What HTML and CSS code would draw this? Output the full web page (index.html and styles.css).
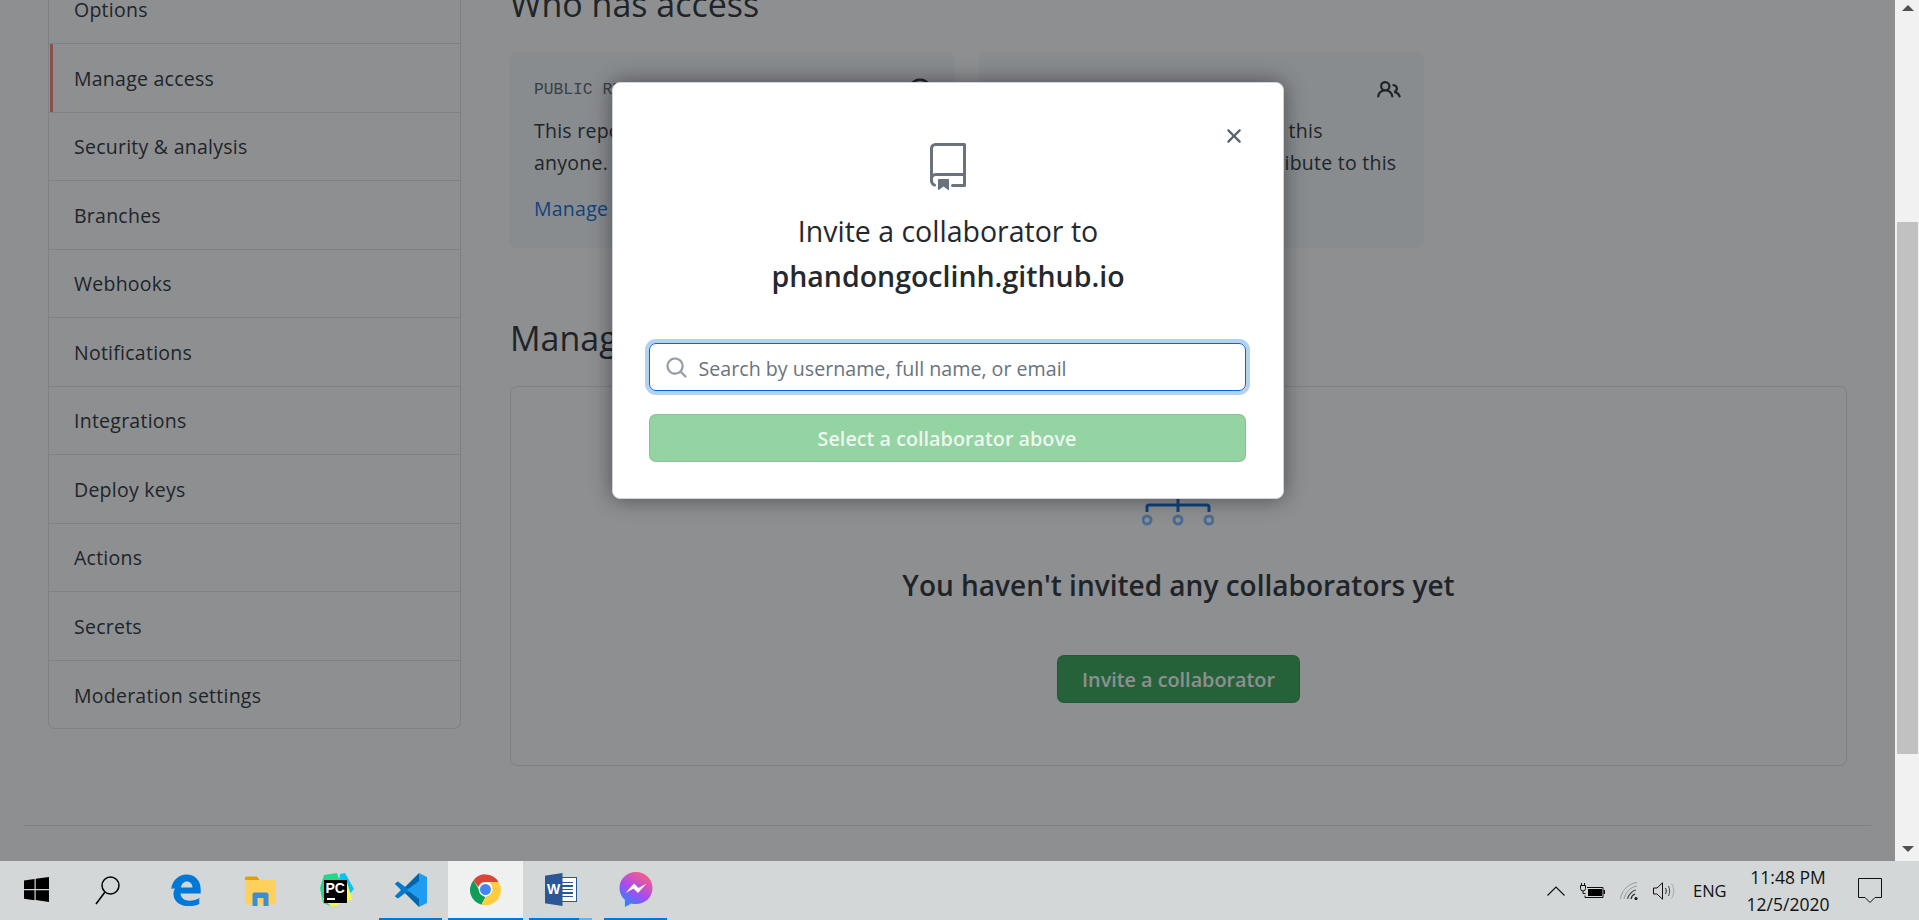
FILE: index.html
```html
<!DOCTYPE html>
<html lang="en">
<head>
    <meta charset="UTF-8">
    <title>Manage access</title>
    <link rel="stylesheet" href="styles.css">
</head>
<body>
    <div class="desktop">
        <div class="viewport">
            <div class="page">
                <div class="columns">
                    <!-- Settings menu -->
                    <nav class="menu">
                        <a class="menu-item">Options</a>
                        <a class="menu-item selected">Manage access</a>
                        <a class="menu-item">Security &amp; analysis</a>
                        <a class="menu-item">Branches</a>
                        <a class="menu-item">Webhooks</a>
                        <a class="menu-item">Notifications</a>
                        <a class="menu-item">Integrations</a>
                        <a class="menu-item">Deploy keys</a>
                        <a class="menu-item">Actions</a>
                        <a class="menu-item">Secrets</a>
                        <a class="menu-item">Moderation settings</a>
                    </nav>

                    <main class="content">
                        <h2 class="section-title">Who has access</h2>
                        <div class="cards">
                            <div class="card">
                                <div class="card-head">
                                    <span class="card-label">PUBLIC REPOSITORY</span>
                                    <svg class="card-icon" viewBox="0 0 16 16"><circle cx="8" cy="8" r="7" fill="none" stroke="currentColor" stroke-width="1.5"/></svg>
                                </div>
                                <p>This repository is public and visible to<br>anyone.</p>
                                <a class="link">Manage</a>
                            </div>
                            <div class="card">
                                <div class="card-head">
                                    <span class="card-label">DIRECT ACCESS</span>
                                    <svg class="card-icon" viewBox="0 0 16 16"><path fill="currentColor" fill-rule="evenodd" d="M5.5 3.5a2 2 0 100 4 2 2 0 000-4zM2 5.5a3.5 3.5 0 115.898 2.549 5.507 5.507 0 013.034 4.084.75.75 0 11-1.482.235 4.001 4.001 0 00-7.9 0 .75.75 0 01-1.482-.236A5.507 5.507 0 013.102 8.05 3.49 3.49 0 012 5.5zM11 4a.75.75 0 100 1.5 1.5 1.5 0 01.666 2.844.75.75 0 00-.416.672v.352a.75.75 0 00.574.73c1.2.289 2.162 1.2 2.522 2.372a.75.75 0 101.434-.44 5.01 5.01 0 00-2.56-3.012A3 3 0 0011 4z"/></svg>
                                </div>
                                <p>0 collaborators have access to this<br>repository. Only you can contribute to this<br>repository.</p>
                            </div>
                        </div>

                        <h2 class="section-title manage-title">Manage access</h2>
                        <div class="empty-box">
                            <svg class="network-icon" width="72" height="150" viewBox="0 0 72 150">
                                <path d="M36 108v17" stroke="#0366d6" stroke-width="3" fill="none"/>
                                <path d="M5 125v-5a2 2 0 012-2h58a2 2 0 012 2v5" stroke="#0366d6" stroke-width="3" fill="none"/>
                                <g fill="none" stroke="#79b8ff" stroke-width="3">
                                    <circle cx="5" cy="133" r="4"/>
                                    <circle cx="36" cy="133" r="4"/>
                                    <circle cx="67" cy="133" r="4"/>
                                </g>
                            </svg>
                            <h3 class="empty-title">You haven't invited any collaborators yet</h3>
                            <button class="btn-invite" type="button">Invite a collaborator</button>
                        </div>
                    </main>
                </div>
                <div class="page-rule"></div>
            </div>

            <div class="overlay"></div>

            <!-- Invite dialog -->
            <div class="modal">
                <svg class="modal-close" viewBox="0 0 16 16"><path fill="currentColor" fill-rule="evenodd" d="M3.720 3.720a.75.75 0 011.060 0L8 6.940l3.220-3.220a.75.75 0 111.060 1.060L9.060 8l3.220 3.220a.75.75 0 11-1.060 1.060L8 9.060l-3.220 3.220a.75.75 0 01-1.060-1.060L6.940 8 3.720 4.780a.75.75 0 010-1.060z"/></svg>
                <svg class="modal-book" viewBox="3 0 18 24"><path fill="currentColor" fill-rule="evenodd" d="M3 2.750A2.750 2.750 0 015.750 0h14.500a.75.75 0 01.750.750v20.500a.75.75 0 01-.750.750h-6a.75.75 0 010-1.500h5.250v-4H6A1.500 1.500 0 004.500 18v.750c0 .716.430 1.334 1.050 1.605a.75.75 0 01-.600 1.374A3.250 3.250 0 013 18.750v-16zM19.500 1.500V15H6c-.546 0-1.059.146-1.500.401V2.750c0-.690.560-1.250 1.250-1.250H19.500z"/><path fill="currentColor" d="M7 18.250a.25.25 0 01.25-.25h5a.25.25 0 01.25.25v5.010a.25.25 0 01-.397.201l-2.206-1.604a.25.25 0 00-.294 0L7.397 23.460a.25.25 0 01-.397-.200v-5.010z"/></svg>
                <div class="modal-title">Invite a collaborator to</div>
                <div class="modal-repo">phandongoclinh.github.io</div>
                <div class="search-box">
                    <svg class="search-icon" viewBox="0 0 16 16"><path fill="currentColor" fill-rule="evenodd" d="M11.500 7a4.499 4.499 0 11-8.998 0A4.499 4.499 0 0111.500 7zm-.820 4.740a6 6 0 111.060-1.060l3.040 3.040a.75.75 0 11-1.060 1.060l-3.040-3.040z"/></svg>
                    <span class="search-text">Search by username, full name, or email</span>
                </div>
                <button class="btn-select" type="button">Select a collaborator above</button>
            </div>
        </div>

        <!-- Browser scrollbar -->
        <div class="scrollbar">
            <div class="arrow-up"></div>
            <div class="thumb"></div>
            <div class="arrow-down"></div>
        </div>
    </div>

    <footer class="taskbar">
        <div class="tb-apps">
            <div class="tb-item tb-start">
                <svg width="25" height="25" viewBox="0 0 25 25"><path fill="#000" d="M0 3.500l10.500-1.500v10H0zM11.700 1.800L25 0v12H11.700zM0 13.200h10.500v10L0 21.700zM11.700 13.200H25V25l-13.300-1.900z"/></svg>
            </div>
            <div class="tb-item tb-start">
                <svg width="26" height="32" viewBox="0 0 26 32"><circle cx="15.500" cy="11.500" r="8.500" fill="none" stroke="#000" stroke-width="1.500"/><path d="M10 18L1 30" stroke="#000" stroke-width="1.500"/></svg>
            </div>
            <div class="tb-item tb-first">
                <svg width="30" height="32" viewBox="0 0 30 32"><path fill="#0078d7" d="M.3 15C1.200 6 8 .5 15.500.5 24 .5 29.700 6.500 29.700 15.500v4H9.500c.5 5 4.500 7.200 9 7.200 3.600 0 7-1 9.800-2.700v6c-3 1.500-6.900 2.200-10.800 2.200C8.500 32 2.500 27 2.500 20c0-4.500 2.500-8.500 7.500-10.500-1.800 1.700-3 3.500-3.300 5-1 .1-4.500-.5-6.400.5zm9.700-1.500h11.500c0-3.500-2.400-6-5.500-6-3.200 0-5.600 2.500-6 6z"/></svg>
            </div>
            <div class="tb-item">
                <svg width="31" height="32" viewBox="0 0 31 32"><path fill="#e0a100" d="M0 4a1.500 1.500 0 011.500-1.500h10.500l2.500 3.500H0z"/><path fill="#ffd15c" d="M0 6h29.500A1.500 1.500 0 0131 7.500V29a1.500 1.500 0 01-1.500 1.500h-28A1.500 1.500 0 010 29z"/><path fill="#3d8dd6" d="M7.500 32V20.500a2 2 0 012-2h12a2 2 0 012 2V32h-5v-8h-6v8z"/></svg>
            </div>
            <div class="tb-item">
                <div class="pycharm">
                    <svg class="pc-back" width="36" height="36" viewBox="0 0 36 36"><path fill="#21d789" d="M2 16L6 3l13-2 4 12-8 22L5 31z"/><path fill="#07c3f2" d="M22 2l5-1 9 16-8 9-8-10z"/><path fill="#fcf84a" d="M14 12l15-2 5 17-20 8-9-8z"/></svg>
                    <div class="pc-tile">PC<i></i></div>
                </div>
            </div>
            <div class="tb-item running">
                <svg width="36" height="36" viewBox="0 0 36 36"><path fill="#0065a9" d="M26 1L12 15 5 10 2 12l6.500 6L2 24l3 2 7-5 14 14z"/><path fill="#007acc" d="M12 15L5 9.500 2 11.500 8 18 2 24.500l3 2 7-5.500 9-3z"/><path fill="#1f9cf0" d="M26 1l8 4v26l-8 4V9l-12 9 12 9z"/></svg>
            </div>
            <div class="tb-item running active">
                <svg width="33" height="33" viewBox="0 0 48 48"><path fill="#db4437" d="M24 2a22 22 0 0119 11H24a11 11 0 00-10.500 7.500L6.600 10.500A22 22 0 0124 2z"/><path fill="#0f9d58" d="M6.600 10.500l9.500 16.500A11 11 0 0024 35l-6 11A22 22 0 016.600 10.500z"/><path fill="#ffcd40" d="M43 13a22 22 0 01-25 33l9.500-16.500A11 11 0 0033 18l-3-5z"/><circle cx="24" cy="24" r="10" fill="#fff"/><circle cx="24" cy="24" r="8" fill="#4285f4"/></svg>
            </div>
            <div class="tb-item running stacked">
                <div class="word">
                    <div class="word-page"><i></i><i></i><i></i><i></i><i></i></div>
                    <div class="word-cover">W</div>
                </div>
            </div>
            <div class="tb-item running">
                <svg width="34" height="36" viewBox="0 0 34 36"><defs><linearGradient id="msgr" x1="0.2" y1="1" x2="0.8" y2="0"><stop offset="0" stop-color="#1d8cff"/><stop offset=".45" stop-color="#a84bf0"/><stop offset="1" stop-color="#ff5f7e"/></linearGradient></defs><path fill="url(#msgr)" d="M17 0C7.500 0 .5 7 .5 16c0 4.800 2 8.900 5.400 11.800V35l6.300-3.500c1.500.4 3.100.6 4.800.6 9.500 0 16.500-7 16.500-16S26.500 0 17 0z"/><path fill="#fff" d="M6.500 21l8.500-9.500 4.500 4.500 8-4.500-8.500 9.500-4.500-4.500z"/></svg>
            </div>
        </div>

        <div class="tb-tray">
            <svg class="tray-chevron" width="18" height="10" viewBox="0 0 18 10"><path d="M.5 9.500L9 1l8.500 8.500" fill="none" stroke="#111" stroke-width="1.200"/></svg>
            <svg class="tray-battery" width="25" height="16" viewBox="0 0 25 16"><path d="M1.500 0v2.500M4.500 0v2.500" stroke="#111"/><path d="M.5 2.500h5v3a2.500 2.500 0 01-5 0zM3 8v2.500h2.500" fill="none" stroke="#111"/><path d="M7 4.500h16v10H5v-2" fill="none" stroke="#111"/><rect x="8" y="6" width="14" height="7" fill="#000"/><rect x="23.500" y="7" width="1.500" height="4" fill="#111"/></svg>
            <svg class="tray-wifi" width="18" height="18" viewBox="0 0 18 18"><g fill="none"><path d="M.5 17C1.500 8.500 8.500 1.500 17 .5" stroke="#999" stroke-width="1"/><path d="M4 17C5 10.500 10.500 5 17 4" stroke="#999" stroke-width="1"/><path d="M7.500 17C8 13 13 8 16 8" stroke="#555" stroke-width="1.200"/><path d="M11 17C11.500 14.500 13.500 12.500 15 12" stroke="#222" stroke-width="1.200"/></g><circle cx="16" cy="16.500" r="1.500" fill="#111"/></svg>
            <svg class="tray-volume" width="23" height="18" viewBox="0 0 23 18"><path d="M.5 6h3.500L9.500.8v16.400L4 12H.5z" fill="none" stroke="#111"/><path d="M12.500 6c1 2 1 4 0 6" fill="none" stroke="#222"/><path d="M15.500 4c1.500 3 1.500 7 0 10" fill="none" stroke="#444"/><path d="M18.500 1.500c3 4.500 3 10.500 0 15" fill="none" stroke="#aaa"/></svg>
            <span class="tray-lang">ENG</span>
            <div class="tray-clock">
                <span>11:48 PM</span>
                <span>12/5/2020</span>
            </div>
            <svg class="tray-note" width="24" height="26" viewBox="0 0 24 26"><path d="M.5.5h23v19h-6.500l-5 5-5-5H.5z" fill="none" stroke="#111"/></svg>
        </div>
    </footer>
</body>
</html>
```

FILE: styles.css
```css
* {
    box-sizing: border-box;
}
html, body {
    height: 100%;
}
body {
    margin: 0;
    display: flex;
    flex-direction: column;
    overflow: hidden;
    font-family: "Open Sans", "Noto Sans", sans-serif;
    color: #24292e;
    background: #fff;
}
.desktop {
    flex: 1;
    min-height: 0;
    display: flex;
}
.viewport {
    flex: 1;
    position: relative;
    overflow: hidden;
    background: #fff;
}
.page {
    margin-top: -25px;
    padding: 0 24px;
}
.columns {
    display: flex;
    padding: 0 24px;
}

/* menu */
.menu {
    width: 413px;
    height: 754px;
    flex: none;
    border: 1px solid #e1e4e8;
    border-top: none;
    border-radius: 0 0 7px 7px;
    display: flex;
    flex-direction: column;
}
.menu-item {
    position: relative;
    height: 68.500px;
    flex: none;
    padding: 1px 0 0 25px;
    display: flex;
    align-items: center;
    font-size: 19.500px;
    letter-spacing: .25px;
    border-bottom: 1px solid #e1e4e8;
}
.menu-item:first-child {
    height: 69px;
}
.menu-item:last-child {
    border-bottom: none;
}
.menu-item.selected::before {
    content: "";
    position: absolute;
    left: 1px;
    top: 0;
    bottom: 0;
    width: 3px;
    background: #f9826c;
}

/* content */
.content {
    flex: 1;
    margin-left: 49px;
}
.section-title {
    margin: 9px 0 0;
    font-size: 34px;
    font-weight: 400;
    line-height: 40px;
    height: 40px;
}
.cards {
    display: flex;
    gap: 24px;
    margin-top: 28px;
}
.card {
    width: 445px;
    height: 196px;
    padding: 26px 23px 0 24px;
    background: #f6f8fa;
    border-radius: 7px;
    font-size: 19.500px;
    letter-spacing: .25px;
    line-height: 32px;
}
.card p {
    margin: 13px 0 0;
    white-space: nowrap;
}
.card-head {
    display: flex;
    justify-content: space-between;
    align-items: center;
    height: 24px;
}
.card-label {
    font-family: "Liberation Mono", monospace;
    font-size: 16.300px;
    letter-spacing: 0;
    color: #586069;
}
.card-icon {
    width: 24px;
    height: 24px;
}
.link {
    display: block;
    margin-top: 14px;
    color: #0366d6;
}
.manage-title {
    margin-top: 70px;
}
.empty-box {
    height: 380px;
    margin-top: 28px;
    border: 1px solid #e1e4e8;
    border-radius: 7px;
    display: flex;
    flex-direction: column;
    align-items: center;
}
.network-icon {
    flex: none;
    margin-right: 2px;
}
.empty-title {
    margin: 28px 0 0;
    font-size: 28px;
    font-weight: 600;
    line-height: 40px;
}
.btn-invite {
    width: 243px;
    height: 48px;
    margin-top: 50px;
    background: #2ea44f;
    color: #fff;
    border: 1px solid rgba(27, 31, 35, .15);
    border-radius: 7px;
    font-family: inherit;
    font-size: 19.800px;
    font-weight: 600;
}
.page-rule {
    height: 1px;
    margin-top: 59px;
    background: #e1e4e8;
}
.overlay {
    position: absolute;
    top: 0;
    left: 0;
    right: 0;
    bottom: 0;
    background: rgba(27, 31, 35, .5);
}

/* dialog */
.modal {
    position: absolute;
    left: 612px;
    top: 82px;
    width: 672px;
    height: 417px;
    padding: 60px 37px 0;
    background: #fff;
    border: 1px solid #d1d5da;
    border-radius: 8px;
    box-shadow: 0 0 22px rgba(0, 0, 0, .45);
    display: flex;
    flex-direction: column;
    align-items: center;
}
.modal-close {
    position: absolute;
    right: 37px;
    top: 41px;
    width: 24px;
    height: 24px;
    color: #586069;
}
.modal-book {
    width: 36px;
    height: 48px;
    flex: none;
    color: #6a737d;
}
.modal-title {
    margin-top: 18px;
    font-size: 28.500px;
    line-height: 45px;
}
.modal-repo {
    font-size: 28.500px;
    font-weight: 600;
    line-height: 45px;
}
.search-box {
    width: 597px;
    height: 48px;
    margin: 44px 2px 0 0;
    flex: none;
    padding-left: 15px;
    display: flex;
    align-items: center;
    gap: 11px;
    border: 1px solid #0366d6;
    border-radius: 7px;
    box-shadow: 0 0 0 4px rgba(3, 102, 214, .3);
}
.search-icon {
    width: 23px;
    height: 23px;
    flex: none;
    color: #959da5;
}
.search-text {
    font-size: 19.650px;
    color: #6a737d;
    padding-top: 2px;
}
.btn-select {
    width: 597px;
    height: 48px;
    margin: 23px 2px 0 0;
    flex: none;
    background: #94d3a2;
    color: rgba(255, 255, 255, .85);
    border: 1px solid rgba(27, 31, 35, .1);
    border-radius: 7px;
    font-family: inherit;
    font-size: 19.800px;
    font-weight: 600;
}

/* scrollbar */
.scrollbar {
    width: 24px;
    flex: none;
    background: #f1f1f1;
    display: flex;
    flex-direction: column;
    align-items: center;
    padding: 5px 1px 0 2px;
}
.arrow-up, .arrow-down {
    width: 0;
    height: 0;
    flex: none;
    border-left: 6px solid transparent;
    border-right: 6px solid transparent;
}
.arrow-up {
    border-bottom: 6px solid #505050;
}
.arrow-down {
    margin-top: 92px;
    border-top: 6px solid #505050;
}
.thumb {
    width: 100%;
    height: 532px;
    margin-top: 211px;
    flex: none;
    background: #c1c1c1;
}

/* taskbar */
.taskbar {
    height: 59px;
    flex: none;
    background: #d3d7d8;
    display: flex;
    justify-content: space-between;
}
.tb-apps {
    display: flex;
}
.tb-item {
    width: 75px;
    flex: none;
    display: flex;
    align-items: center;
    justify-content: center;
    position: relative;
    padding-bottom: 2px;
}
.tb-start {
    width: 72px;
}
.tb-first {
    margin-left: 4px;
}
.running::after {
    content: "";
    position: absolute;
    left: 6px;
    right: 6px;
    bottom: 0;
    height: 2px;
    background: #0078d7;
}
.stacked::after {
    background: linear-gradient(to right, #0078d7 79%, #6cb2ea 79%);
}
.tb-item.active {
    background: #eff1f1;
}
.tb-item.active::after {
    left: 0;
    right: 0;
}
.pycharm {
    position: relative;
    width: 36px;
    height: 36px;
}
.pc-back {
    display: block;
}
.pc-tile {
    position: absolute;
    left: 6px;
    top: 8px;
    width: 23px;
    height: 23px;
    padding: 2px 0 0 2px;
    background: #000;
    color: #fff;
    font: 700 14px/13px "Liberation Sans", sans-serif;
}
.pc-tile i {
    position: absolute;
    left: 3px;
    bottom: 3px;
    width: 8px;
    height: 2px;
    background: #fff;
}
.word {
    position: relative;
    width: 32px;
    height: 33px;
}
.word-page {
    position: absolute;
    left: 13px;
    top: 4px;
    width: 19px;
    height: 25px;
    padding: 4px 3px;
    background: #fff;
    border: 1px solid #2b5797;
    display: flex;
    flex-direction: column;
    gap: 2px;
}
.word-page i {
    height: 2px;
    background: #2b5797;
}
.word-cover {
    position: absolute;
    left: 0;
    top: 0;
    width: 18px;
    height: 33px;
    background: #2b5797;
    color: #fff;
    font: 700 14px/33px "Liberation Sans", sans-serif;
    text-align: center;
    clip-path: polygon(0 8%, 100% 0, 100% 100%, 0 92%);
}
.tb-tray {
    display: flex;
    align-items: center;
    color: #111;
}
.tray-battery {
    margin-left: 15px;
}
.tray-wifi {
    margin-left: 15px;
}
.tray-volume {
    margin-left: 15px;
}
.tray-lang {
    margin-left: 17px;
    width: 34px;
    font-size: 16.500px;
}
.tray-clock {
    width: 86px;
    margin-left: 18px;
    display: flex;
    flex-direction: column;
    align-items: center;
    font-size: 17.500px;
    line-height: 27px;
}
.tray-note {
    margin-left: 27px;
    margin-right: 37px;
}
```
